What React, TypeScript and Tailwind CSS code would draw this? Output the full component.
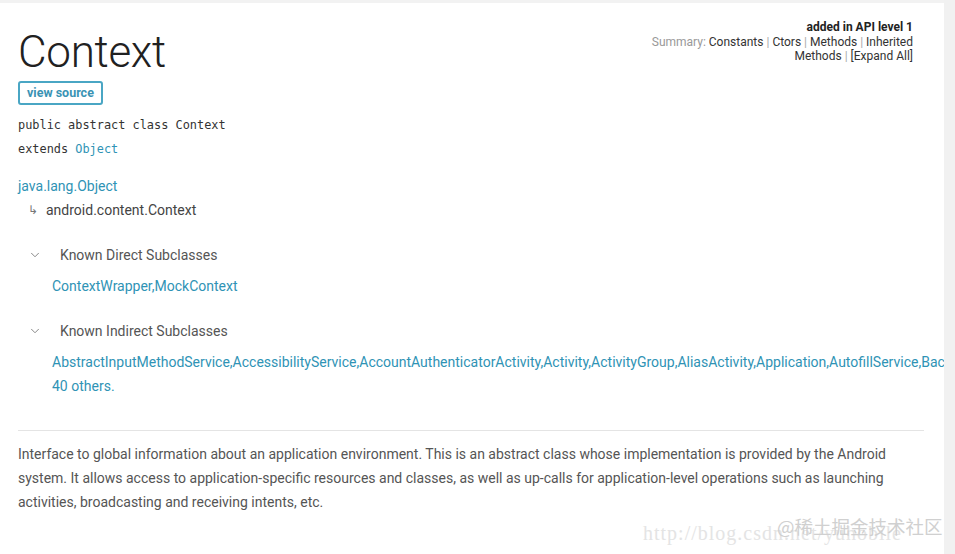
import { ChevronDown } from "lucide-react";

const link = "text-[#2f93b5]";

const indirect = [
  "AbstractInputMethodService",
  "AccessibilityService",
  "AccountAuthenticatorActivity",
  "Activity",
  "ActivityGroup",
  "AliasActivity",
  "Application",
  "AutofillService",
  "BackupAgent",
  "BackupAgentHelper",
];

function Subclasses({ title, children }: { title: string; children: React.ReactNode }) {
  return (
    <div>
      <div className="flex items-center h-6">
        <ChevronDown className="w-[14px] h-[14px] text-[#777] ml-[28px]" strokeWidth={1.5} />
        <span className="ml-[18px] text-[14px] text-[#555]">{title}</span>
      </div>
      <div className="pl-[52px] mt-[7px] text-[14px] leading-6">{children}</div>
    </div>
  );
}

export default function App() {
  return (
    <div className="relative flex w-[955px] h-[554px] overflow-hidden bg-white font-['Roboto',sans-serif]">
      <main className="relative w-[944px] h-full overflow-hidden border-t-[3px] border-[#f2f2f2]">
        <div className="flex justify-between pl-[18px] pr-[31px]">
          <h1 className="mt-[21px] text-[44px] leading-[56px] font-light text-[#212121] tracking-[-0.3px]">Context</h1>
          <div className="mt-[17px] text-right text-[12px] leading-[14.5px] text-[#333]">
            <div className="font-bold text-[#222]">added in API level 1</div>
            <div>
              <span className="text-[#999]">Summary: </span>Constants <span className="text-[#aaa]">|</span> Ctors{" "}
              <span className="text-[#aaa]">|</span> Methods <span className="text-[#aaa]">|</span> Inherited
            </div>
            <div>
              Methods <span className="text-[#aaa]">|</span> [Expand All]
            </div>
          </div>
        </div>

        <div className="px-[18px]">
          <div className="mt-[1px] inline-flex items-center h-[24px] px-[7px] border-2 border-[#4aa6c4] rounded-[3px] text-[12.5px] font-bold text-[#3a93b4]">
            view source
          </div>

          <div className="mt-[8px] font-['DejaVu_Sans_Mono',monospace] text-[11.9px] leading-6 text-[#333]">
            <div>public abstract class Context</div>
            <div>
              extends <span className={link}>Object</span>
            </div>
          </div>

          <div className="mt-[13px] text-[14px] leading-6">
            <div className={link}>java.lang.Object</div>
            <div className="flex text-[#444]">
              <span className="ml-[10px] w-[18px] text-[#777] text-[12px]">↳</span>
              <span>android.content.Context</span>
            </div>
          </div>

          <div className="-ml-[18px] mt-[21px] flex flex-col gap-[21px]">
            <Subclasses title="Known Direct Subclasses">
              <span className={link}>ContextWrapper,MockContext</span>
            </Subclasses>
            <Subclasses title="Known Indirect Subclasses">
              <div className={`${link} whitespace-nowrap`}>{indirect.join(",")},</div>
              <div className={link}>40 others.</div>
            </Subclasses>
          </div>

          <hr className="mt-[32px] mr-[2px] border-t border-[#e4e4e4]" />

          <p className="mt-[11px] text-[14px] leading-6 text-[#555] w-[880px]">
            Interface to global information about an application environment. This is an abstract class whose implementation is
            provided by the Android system. It allows access to application-specific resources and classes, as well as up-calls
            for application-level operations such as launching activities, broadcasting and receiving intents, etc.
          </p>
        </div>

        <div className="absolute left-[643px] top-[515px] font-['Liberation_Serif',serif] text-[20px] text-[#e4e4e4] whitespace-nowrap tracking-[1px]">
          http://blog.csdn.net/yuhobile
        </div>
        <div className="absolute left-[777px] top-[510px] font-['Noto_Sans_CJK_SC',sans-serif] text-[18.5px] text-[#d0d0d0] whitespace-nowrap">
          @稀土掘金技术社区
        </div>
      </main>
      <div className="w-[11px] h-full bg-[#f1f1f1]" />
    </div>
  );
}
